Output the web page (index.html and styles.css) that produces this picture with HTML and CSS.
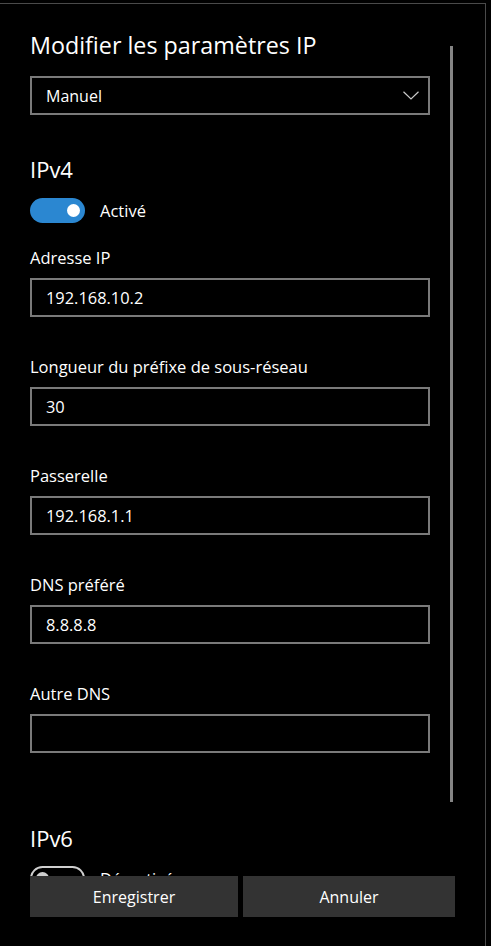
FILE: index.html
```html
<!DOCTYPE html>
<html lang="fr">
<head>
<meta charset="utf-8">
<title>Modifier les paramètres IP</title>
<link rel="stylesheet" href="styles.css">
</head>
<body>
<div class="frame">
  <div class="scroller">
    <div class="content">
      <h1 class="title">Modifier les paramètres IP</h1>
      <div class="select">
        <span>Manuel</span>
        <svg class="chevron" width="16" height="9" viewBox="0 0 16 9"><path d="M0.5 0.8 L8 8 L15.5 0.8" fill="none" stroke="#c8c8c8" stroke-width="1.2"/></svg>
      </div>
      <h2 class="section">IPv4</h2>
      <div class="toggle-row">
        <span class="toggle on"><span class="knob"></span></span>
        <span class="toggle-label">Activé</span>
      </div>
      <div class="field first">
        <div class="label">Adresse IP</div>
        <div class="input">192.168.10.2</div>
      </div>
      <div class="field">
        <div class="label">Longueur du préfixe de sous-réseau</div>
        <div class="input">30</div>
      </div>
      <div class="field">
        <div class="label">Passerelle</div>
        <div class="input">192.168.1.1</div>
      </div>
      <div class="field">
        <div class="label">DNS préféré</div>
        <div class="input">8.8.8.8</div>
      </div>
      <div class="field">
        <div class="label">Autre DNS</div>
        <div class="input"></div>
      </div>
      <h2 class="section v6">IPv6</h2>
      <div class="toggle-row off-row">
        <span class="toggle off"><span class="knob"></span></span>
        <span class="toggle-label">Désactivé</span>
      </div>
    </div>
    <div class="scrollbar"></div>
  </div>
  <div class="footer">
    <button class="btn save">Enregistrer</button>
    <button class="btn cancel">Annuler</button>
  </div>
</div>
</body>
</html>
```
FILE: styles.css
```css
* { box-sizing: border-box; }
html, body { margin: 0; padding: 0; background: #000; }
body {
  font-family: "Open Sans", "Noto Sans", sans-serif;
  color: #fff;
  width: 491px;
  height: 946px;
  overflow: hidden;
}
.frame {
  margin-top: 3px;
  width: 486px;
  height: 943px;
  border-top: 1px solid #4a4a4a;
  border-right: 1px solid #4a4a4a;
  display: flex;
  flex-direction: column;
}
.scroller {
  height: 872px;
  overflow: hidden;
  display: flex;
  gap: 20px;
  padding-left: 30px;
  flex: none;
}
.content {
  width: 400px;
  flex: none;
  padding-top: 25px;
}
.scrollbar {
  width: 3px;
  height: 756px;
  margin-top: 42px;
  background: #858585;
  flex: none;
}
.title {
  margin: 0;
  font-size: 23.3px;
  font-weight: 400;
  line-height: 32px;
  height: 32px;
}
.select {
  margin-top: 15px;
  height: 39px;
  border: 2px solid #7a7a7a;
  display: flex;
  align-items: center;
  justify-content: space-between;
  padding: 0 9px 0 14px;
  font-size: 16px;
}
.section {
  margin: 38px 0 0;
  font-size: 22px;
  font-weight: 400;
  line-height: 32px;
  height: 32px;
}
.section.v6 { margin-top: 69px; }
.toggle-row {
  margin-top: 13px;
  display: flex;
  align-items: center;
  gap: 15px;
  height: 25px;
}
.off-row { margin-top: 12px; }
.toggle {
  width: 55px;
  height: 25px;
  border-radius: 13px;
  display: flex;
  align-items: center;
  flex: none;
}
.toggle.on {
  background: #2b87d1;
  justify-content: flex-end;
  padding-right: 5px;
}
.toggle.off {
  border: 2px solid #cfcfcf;
  padding-left: 4px;
}
.knob {
  width: 13px;
  height: 13px;
  border-radius: 50%;
  background: #fff;
}
.toggle.off .knob { background: #cfcfcf; }
.toggle-label {
  font-size: 16.5px;
  line-height: 20px;
}
.field { margin-top: 40px; }
.field.first { margin-top: 25px; }
.label {
  font-size: 16.5px;
  line-height: 20px;
  height: 20px;
  white-space: nowrap;
}
.input {
  margin-top: 10px;
  height: 39px;
  border: 2px solid #7a7a7a;
  padding: 0 14px;
  font-size: 16.4px;
  display: flex;
  align-items: center;
}
.footer {
  display: flex;
  gap: 5px;
  padding-left: 30px;
  flex: none;
}
.btn {
  height: 41px;
  background: #333;
  color: #fff;
  border: 0;
  padding: 0;
  font-family: "Open Sans", "Noto Sans", sans-serif;
  font-size: 16px;
}
.save { width: 208px; }
.cancel { width: 212px; }
```
